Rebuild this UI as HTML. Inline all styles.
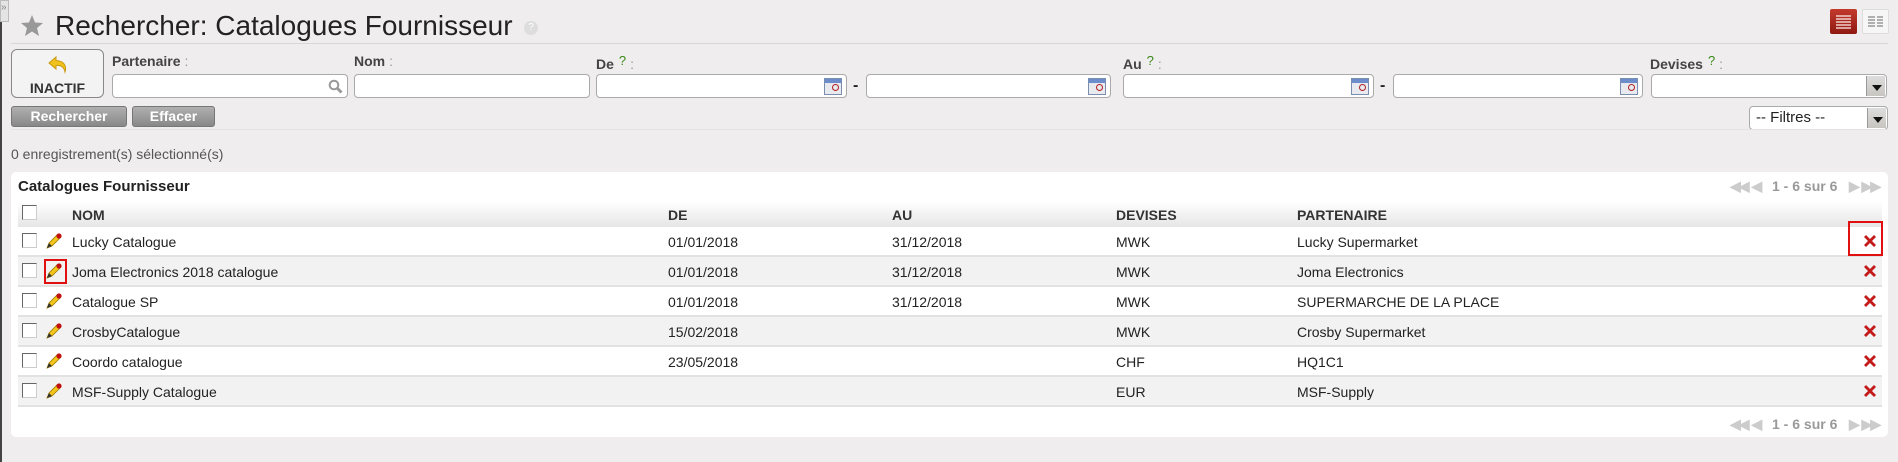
<!DOCTYPE html>
<html><head><meta charset="utf-8">
<style>
*{box-sizing:border-box;margin:0;padding:0}
body{width:1898px;height:462px;background:#efedee;font-family:"Liberation Sans",Arial,sans-serif;color:#222;position:relative;overflow:hidden}
.a{position:absolute}
.lbl{font-size:14px;font-weight:bold;color:#444}
.lbl .q{color:#3a8a18;font-weight:normal;font-size:13px;vertical-align:4px;margin-left:5px}
.lbl .c{color:#999;font-weight:normal;margin-left:4px}
.inp{position:absolute;height:24px;background:#fff;border:1px solid #aaa;border-radius:4px}
.cal{position:absolute;right:4px;top:3px;width:18px;height:17px;border:1px solid #7a8fb0;background:linear-gradient(#6d8ccb 0 4px,#e8eaf0 4px);}
.cal:after{content:"";position:absolute;right:2px;top:5px;width:5px;height:5px;border:1.5px solid #b02020;border-radius:50%}
.dash{position:absolute;font-size:16px;font-weight:bold;top:77px}
.btn{position:absolute;top:106px;height:21px;border:1px solid #777;border-radius:3px;background:linear-gradient(#b0b0b0,#888);color:#fff;font-weight:bold;font-size:14px;text-align:center;line-height:19px}
.dd{position:absolute;right:1px;top:1px;bottom:1px;width:19px;background:linear-gradient(#ddd,#c8c5c0);border-left:1px solid #999}
.dd:after{content:"";position:absolute;left:5px;top:9px;border:5px solid transparent;border-top:6px solid #111;border-bottom:0}
.row{position:absolute;left:18px;width:1864px;height:30px;font-size:14px;border-bottom:2px solid #e2e2e2}
.row span{position:absolute;top:7px}
.cb{position:absolute;left:4px;top:6px;width:15px;height:15px;border:1px solid #666;border-right-color:#ccc;border-bottom-color:#ccc;background:#fff}
.pen{position:absolute;left:28px;top:5px}
.x{position:absolute;right:4px;top:6px}
.pg{position:absolute;font-size:14px;font-weight:bold;color:#999}
</style></head><body>
<div class="a" style="left:0;top:0;width:9px;height:22px;background:#e4e4e4;border:1px solid #bbb;font-size:10px;color:#888;line-height:14px">»</div>
<div class="a" style="left:0;top:22px;width:2px;height:440px;background:#444"></div>

<svg class="a" style="left:21px;top:15px" width="22" height="21" viewBox="0 0 22 21"><polygon points="11,0 14,7.5 22,8 16,13 18,21 11,16.5 4,21 6,13 0,8 8,7.5" fill="#999"/></svg>
<div class="a" style="left:55px;top:10px;font-size:28px;color:#222">Rechercher: Catalogues Fournisseur</div>
<div class="a" style="left:524px;top:21px;width:14px;height:14px;border-radius:50%;background:#ddd;color:#fff;font-size:10px;text-align:center;line-height:14px">?</div>
<div class="a" style="left:1830px;top:9px;width:27px;height:25px;background:linear-gradient(#c3392c,#8f1a12);border-radius:2px"><svg width="27" height="25"><g stroke="#f3d0cc" stroke-width="1.5"><line x1="6" y1="7" x2="21" y2="7"/><line x1="6" y1="10" x2="21" y2="10"/><line x1="6" y1="13" x2="21" y2="13"/><line x1="6" y1="16" x2="21" y2="16"/><line x1="6" y1="19" x2="21" y2="19"/></g></svg></div>
<div class="a" style="left:1862px;top:9px;width:27px;height:25px;background:#f6f6f6;border:1px solid #ddd;border-radius:2px"><svg width="25" height="23"><g stroke="#999" stroke-width="1.5"><line x1="5" y1="7" x2="12" y2="7"/><line x1="14" y1="7" x2="20" y2="7"/><line x1="5" y1="10" x2="12" y2="10"/><line x1="14" y1="10" x2="20" y2="10"/><line x1="5" y1="13" x2="12" y2="13"/><line x1="14" y1="13" x2="20" y2="13"/><line x1="5" y1="16" x2="12" y2="16"/><line x1="14" y1="16" x2="20" y2="16"/></g></svg></div>
<div class="a" style="left:11px;top:43px;width:1877px;height:1px;background:#d8d6d7"></div>

<div class="a" style="left:11px;top:49px;width:93px;height:49px;border:1px solid #888;border-radius:6px;background:#f4f3f3;text-align:center">
<svg style="margin-top:6px" width="20" height="18" viewBox="0 0 20 18"><path d="M8 1 L1 7 L8 13 L8 9.5 C13 9 16 11 17 16 C19 10 16 5 8 4.5 Z" fill="#f1c21b" stroke="#c99a10" stroke-width="1"/></svg>
<div style="font-size:14px;font-weight:bold;color:#333;margin-top:1px">INACTIF</div></div>

<div class="a lbl" style="left:112px;top:53px">Partenaire<span class="c">:</span></div>
<div class="inp" style="left:112px;top:74px;width:236px"><svg style="position:absolute;right:4px;top:4px" width="15" height="15"><circle cx="6" cy="6" r="4.3" stroke="#999" stroke-width="2" fill="none"/><line x1="9" y1="9" x2="13.5" y2="13.5" stroke="#999" stroke-width="3"/></svg></div>
<div class="a lbl" style="left:354px;top:53px">Nom<span class="c">:</span></div>
<div class="inp" style="left:354px;top:74px;width:236px"></div>
<div class="a lbl" style="left:596px;top:53px">De<span class="q">?</span><span class="c">:</span></div>
<div class="inp" style="left:596px;top:74px;width:251px"><div class="cal"></div></div>
<div class="dash" style="left:853px">-</div>
<div class="inp" style="left:866px;top:74px;width:245px"><div class="cal"></div></div>
<div class="a lbl" style="left:1123px;top:53px">Au<span class="q">?</span><span class="c">:</span></div>
<div class="inp" style="left:1123px;top:74px;width:251px"><div class="cal"></div></div>
<div class="dash" style="left:1380px">-</div>
<div class="inp" style="left:1393px;top:74px;width:250px"><div class="cal"></div></div>
<div class="a lbl" style="left:1650px;top:53px">Devises<span class="q">?</span><span class="c">:</span></div>
<div class="inp" style="left:1651px;top:74px;width:236px"><div class="dd"></div></div>

<div class="btn" style="left:11px;width:116px">Rechercher</div>
<div class="btn" style="left:132px;width:83px">Effacer</div>
<div class="inp" style="left:1749px;top:106px;width:139px;font-size:15px;padding-left:6px;line-height:22px">-- Filtres --<div class="dd"></div></div>
<div class="a" style="left:11px;top:129px;width:1877px;height:1px;background:#e4e2e3"></div>

<div class="a" style="left:11px;top:146px;font-size:14px;color:#555">0 enregistrement(s) sélectionné(s)</div>

<div class="a" style="left:11px;top:172px;width:1877px;height:265px;background:#fff;border-radius:5px"></div>
<div class="a" style="left:18px;top:178px;font-size:15px;font-weight:bold;color:#222">Catalogues Fournisseur</div>
<div class="pg" style="left:1730px;top:178px;color:#ccc;letter-spacing:-2px">◀◀ &nbsp;◀</div>
<div class="pg" style="left:1772px;top:178px">1 - 6 sur 6</div>
<div class="pg" style="left:1849px;top:178px;color:#ccc;letter-spacing:-2px">▶ &nbsp;▶▶</div>

<div class="row" style="top:202px;height:25px;background:linear-gradient(#fff,#e6e6e6);border-bottom:0;font-weight:bold;color:#333">
<div class="cb" style="top:3px"></div><span style="left:54px;top:5px">NOM</span><span style="left:650px;top:5px">DE</span><span style="left:874px;top:5px">AU</span><span style="left:1098px;top:5px">DEVISES</span><span style="left:1279px;top:5px">PARTENAIRE</span></div>

<div class="row" style="top:227px;background:#fff"><div class="cb"></div><svg class="pen" width="16" height="17" viewBox="0 0 16 17"><path d="M1 16 L3 11 L11 3 L14 6 L6 14 Z" fill="#f2c51c" stroke="#a07a00" stroke-width=".8"/><path d="M1 16 L3 11 L6 14Z" fill="#333"/><circle cx="13" cy="4" r="2.6" fill="#c01010"/></svg><span style="left:54px">Lucky Catalogue</span><span style="left:650px">01/01/2018</span><span style="left:874px">31/12/2018</span><span style="left:1098px">MWK</span><span style="left:1279px">Lucky Supermarket</span><svg class="x" width="16" height="16"><path d="M2 4 L4 2 L8 6 L12 2 L14 4 L10 8 L14 12 L12 14 L8 10 L4 14 L2 12 L6 8Z" fill="#c41a1a"/></svg></div>
<div class="a" style="left:1848px;top:221px;width:35px;height:35px;border:2px solid #e01010"></div>

<div class="row" style="top:257px;background:#f2f2f2"><div class="cb"></div><svg class="pen" width="16" height="17" viewBox="0 0 16 17"><path d="M1 16 L3 11 L11 3 L14 6 L6 14 Z" fill="#f2c51c" stroke="#a07a00" stroke-width=".8"/><path d="M1 16 L3 11 L6 14Z" fill="#333"/><circle cx="13" cy="4" r="2.6" fill="#c01010"/></svg><span style="left:54px">Joma Electronics 2018 catalogue</span><span style="left:650px">01/01/2018</span><span style="left:874px">31/12/2018</span><span style="left:1098px">MWK</span><span style="left:1279px">Joma Electronics</span><svg class="x" width="16" height="16"><path d="M2 4 L4 2 L8 6 L12 2 L14 4 L10 8 L14 12 L12 14 L8 10 L4 14 L2 12 L6 8Z" fill="#c41a1a"/></svg></div>
<div class="a" style="left:44px;top:259px;width:23px;height:25px;border:2px solid #e01010"></div>

<div class="row" style="top:287px;background:#fff"><div class="cb"></div><svg class="pen" width="16" height="17" viewBox="0 0 16 17"><path d="M1 16 L3 11 L11 3 L14 6 L6 14 Z" fill="#f2c51c" stroke="#a07a00" stroke-width=".8"/><path d="M1 16 L3 11 L6 14Z" fill="#333"/><circle cx="13" cy="4" r="2.6" fill="#c01010"/></svg><span style="left:54px">Catalogue SP</span><span style="left:650px">01/01/2018</span><span style="left:874px">31/12/2018</span><span style="left:1098px">MWK</span><span style="left:1279px">SUPERMARCHE DE LA PLACE</span><svg class="x" width="16" height="16"><path d="M2 4 L4 2 L8 6 L12 2 L14 4 L10 8 L14 12 L12 14 L8 10 L4 14 L2 12 L6 8Z" fill="#c41a1a"/></svg></div>

<div class="row" style="top:317px;background:#f2f2f2"><div class="cb"></div><svg class="pen" width="16" height="17" viewBox="0 0 16 17"><path d="M1 16 L3 11 L11 3 L14 6 L6 14 Z" fill="#f2c51c" stroke="#a07a00" stroke-width=".8"/><path d="M1 16 L3 11 L6 14Z" fill="#333"/><circle cx="13" cy="4" r="2.6" fill="#c01010"/></svg><span style="left:54px">CrosbyCatalogue</span><span style="left:650px">15/02/2018</span><span style="left:1098px">MWK</span><span style="left:1279px">Crosby Supermarket</span><svg class="x" width="16" height="16"><path d="M2 4 L4 2 L8 6 L12 2 L14 4 L10 8 L14 12 L12 14 L8 10 L4 14 L2 12 L6 8Z" fill="#c41a1a"/></svg></div>

<div class="row" style="top:347px;background:#fff"><div class="cb"></div><svg class="pen" width="16" height="17" viewBox="0 0 16 17"><path d="M1 16 L3 11 L11 3 L14 6 L6 14 Z" fill="#f2c51c" stroke="#a07a00" stroke-width=".8"/><path d="M1 16 L3 11 L6 14Z" fill="#333"/><circle cx="13" cy="4" r="2.6" fill="#c01010"/></svg><span style="left:54px">Coordo catalogue</span><span style="left:650px">23/05/2018</span><span style="left:1098px">CHF</span><span style="left:1279px">HQ1C1</span><svg class="x" width="16" height="16"><path d="M2 4 L4 2 L8 6 L12 2 L14 4 L10 8 L14 12 L12 14 L8 10 L4 14 L2 12 L6 8Z" fill="#c41a1a"/></svg></div>

<div class="row" style="top:377px;background:#f2f2f2"><div class="cb"></div><svg class="pen" width="16" height="17" viewBox="0 0 16 17"><path d="M1 16 L3 11 L11 3 L14 6 L6 14 Z" fill="#f2c51c" stroke="#a07a00" stroke-width=".8"/><path d="M1 16 L3 11 L6 14Z" fill="#333"/><circle cx="13" cy="4" r="2.6" fill="#c01010"/></svg><span style="left:54px">MSF-Supply Catalogue</span><span style="left:1098px">EUR</span><span style="left:1279px">MSF-Supply</span><svg class="x" width="16" height="16"><path d="M2 4 L4 2 L8 6 L12 2 L14 4 L10 8 L14 12 L12 14 L8 10 L4 14 L2 12 L6 8Z" fill="#c41a1a"/></svg></div>

<div class="pg" style="left:1730px;top:416px;color:#ccc;letter-spacing:-2px">◀◀ &nbsp;◀</div>
<div class="pg" style="left:1772px;top:416px">1 - 6 sur 6</div>
<div class="pg" style="left:1849px;top:416px;color:#ccc;letter-spacing:-2px">▶ &nbsp;▶▶</div>
</body></html>
